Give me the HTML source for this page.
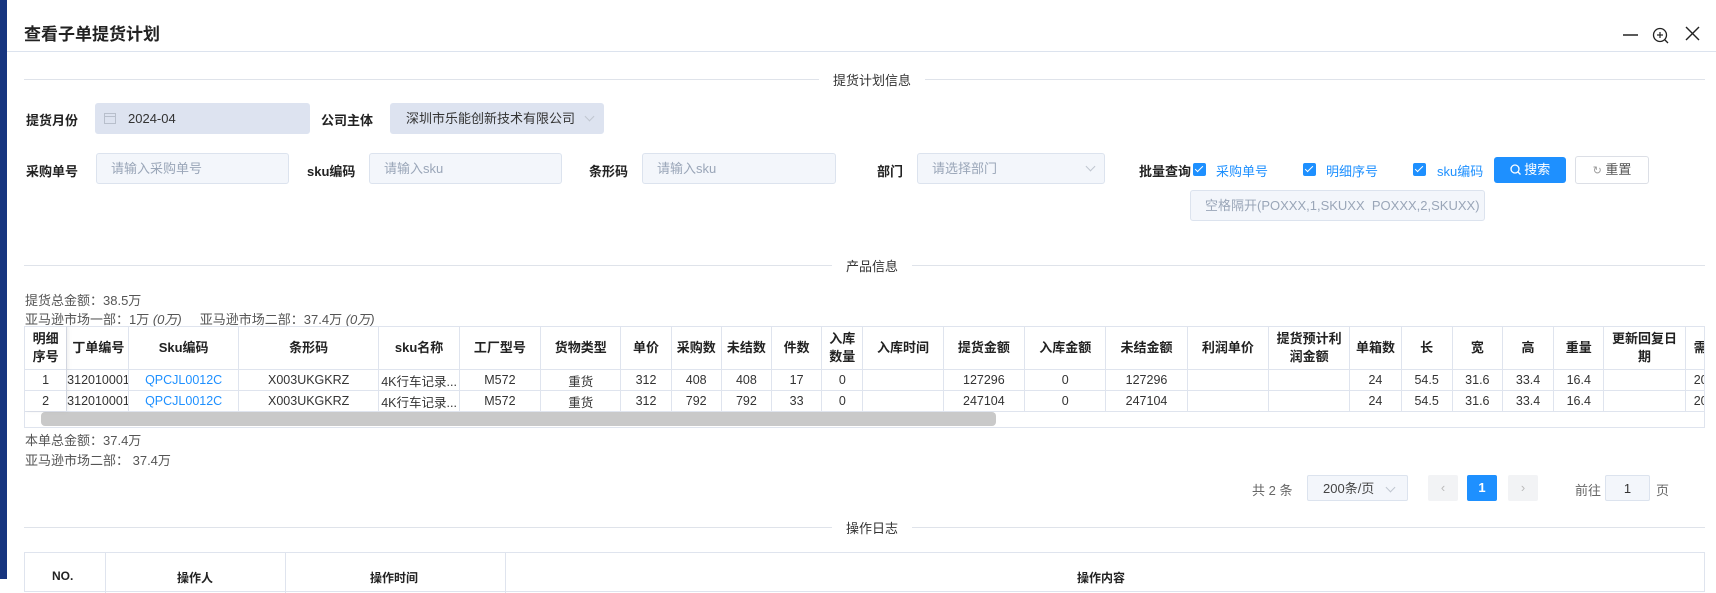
<!DOCTYPE html>
<html><head><meta charset="utf-8">
<style>
*{box-sizing:border-box;margin:0;padding:0}
body{width:1716px;height:579px;overflow:hidden;background:#fff;font-family:"Liberation Sans","Noto Sans CJK SC",sans-serif;font-size:13px;color:#333;position:relative}
.a{position:absolute;white-space:nowrap}
.lbl{font-weight:bold;color:#222;font-size:13px}
.inp{position:absolute;height:31px;border:1px solid #dce3ee;background:#f3f6fb;border-radius:3px;color:#9aa6b8;font-size:13px;line-height:29px;padding-left:14px}
.dis{background:#dde3f0;border-color:#dde3f0;color:#333}
.div{position:absolute;left:24px;right:11px;height:1px;background:#dfe3ea}
.divt{position:absolute;background:#fff;padding:0 14px;font-size:13px;color:#333;transform:translateX(-50%)}
.cb{position:absolute;width:13px;height:13px;background:#1e90ff;border-radius:2px}
.cb:after{content:"";position:absolute;left:4px;top:1px;width:3px;height:7px;border:solid #fff;border-width:0 1.5px 1.5px 0;transform:rotate(45deg)}
.cbt{color:#1e90ff}
table{border-collapse:collapse;table-layout:fixed}
td,th{border:1px solid #dfe4ee;text-align:center;overflow:hidden;white-space:nowrap;font-size:12.5px}
th{font-weight:bold;color:#222;height:43px;line-height:18px;font-size:13px}
td{height:21px;color:#333}
.blue{color:#1e90ff}
.pg{position:absolute;height:26px;top:475px;border-radius:2px;text-align:center;line-height:26px}
.arr{position:absolute;width:7px;height:7px;border:solid #c0c6d0;border-width:0 1px 1px 0;transform:rotate(45deg)}
</style></head><body>
<div class="a" style="left:0;top:0;width:7px;height:579px;background:#17357f"></div>
<div class="a" style="left:24px;top:20px;font-size:17px;font-weight:bold;color:#222">查看子单提货计划</div>
<div class="a" style="left:7px;top:51px;right:0;height:1px;background:#dce3ee"></div>
<svg class="a" style="left:1622px;top:24px" width="90" height="22" viewBox="0 0 90 22">
<line x1="1" y1="11" x2="16" y2="11" stroke="#222" stroke-width="1.5"/>
<circle cx="38" cy="11" r="6.5" fill="none" stroke="#222" stroke-width="1.3"/>
<line x1="42.5" y1="15.5" x2="46" y2="19" stroke="#222" stroke-width="1.3"/>
<line x1="35" y1="11" x2="41" y2="11" stroke="#222" stroke-width="1.2"/><line x1="38" y1="8" x2="38" y2="14" stroke="#222" stroke-width="1.2"/>
<line x1="64" y1="3" x2="77" y2="16" stroke="#222" stroke-width="1.4"/><line x1="77" y1="3" x2="64" y2="16" stroke="#222" stroke-width="1.4"/>
</svg>

<div class="div" style="top:79px"></div><div class="divt" style="left:872px;top:70px">提货计划信息</div>

<div class="a lbl" style="left:26px;top:110px">提货月份</div>
<div class="inp dis" style="left:95px;top:103px;width:215px;padding-left:32px">2024-04</div>
<svg class="a" style="left:104px;top:112px" width="12" height="12"><rect x="0.5" y="1.5" width="11" height="10" fill="none" stroke="#b8bfcc"/><line x1="0" y1="4.5" x2="12" y2="4.5" stroke="#b8bfcc"/></svg>
<div class="a lbl" style="left:321px;top:110px">公司主体</div>
<div class="inp dis" style="left:390px;top:103px;width:214px;padding-left:15px">深圳市乐能创新技术有限公司</div>
<div class="arr" style="left:586px;top:113px"></div>

<div class="a lbl" style="left:26px;top:161px">采购单号</div>
<div class="inp" style="left:96px;top:153px;width:193px">请输入采购单号</div>
<div class="a lbl" style="left:307px;top:161px">sku编码</div>
<div class="inp" style="left:369px;top:153px;width:193px">请输入sku</div>
<div class="a lbl" style="left:589px;top:161px">条形码</div>
<div class="inp" style="left:642px;top:153px;width:194px">请输入sku</div>
<div class="a lbl" style="left:877px;top:161px">部门</div>
<div class="inp" style="left:917px;top:153px;width:188px">请选择部门</div>
<div class="arr" style="left:1087px;top:163px"></div>
<div class="a lbl" style="left:1139px;top:161px">批量查询</div>
<div class="cb" style="left:1193px;top:163px"></div><div class="a cbt" style="left:1216px;top:161px">采购单号</div>
<div class="cb" style="left:1303px;top:163px"></div><div class="a cbt" style="left:1326px;top:161px">明细序号</div>
<div class="cb" style="left:1413px;top:163px"></div><div class="a cbt" style="left:1437px;top:161px">sku编码</div>
<div class="a" style="left:1494px;top:157px;width:72px;height:26px;background:#1e90ff;border-radius:3px;color:#fff;line-height:26px;text-align:center"><svg width="11" height="11" style="vertical-align:-1px"><circle cx="5" cy="5" r="4" fill="none" stroke="#fff" stroke-width="1.3"/><line x1="8" y1="8" x2="10.5" y2="10.5" stroke="#fff" stroke-width="1.3"/></svg> 搜索</div>
<div class="a" style="left:1575px;top:156px;width:74px;height:28px;border:1px solid #dcdfe6;border-radius:3px;color:#555;line-height:26px;text-align:center"><span style="color:#999;font-size:11px">↻</span> 重置</div>
<div class="inp" style="left:1190px;top:190px;width:295px;height:31px;overflow:hidden">空格隔开(POXXX,1,SKUXX&nbsp;&nbsp;POXXX,2,SKUXX)</div>

<div class="div" style="top:265px"></div><div class="divt" style="left:872px;top:256px">产品信息</div>
<div class="a" style="left:25px;top:290px;color:#555">提货总金额：38.5万</div>
<div class="a" style="left:25px;top:309px;color:#555">亚马逊市场一部：1万 <i>(0万)</i>&nbsp;&nbsp;&nbsp;&nbsp;&nbsp;亚马逊市场二部：37.4万 <i>(0万)</i></div>

<div class="a" style="left:24px;top:326px;width:1681px;height:102px;overflow:hidden;border-right:1px solid #dfe4ee">
<table style="width:1712px">
<colgroup><col style="width:42px"><col style="width:62px"><col style="width:109px"><col style="width:140px"><col style="width:80px"><col style="width:81px"><col style="width:80px"><col style="width:50px"><col style="width:50px"><col style="width:50px"><col style="width:50px"><col style="width:41px"><col style="width:80px"><col style="width:81px"><col style="width:81px"><col style="width:81px"><col style="width:81px"><col style="width:81px"><col style="width:51px"><col style="width:51px"><col style="width:50px"><col style="width:51px"><col style="width:50px"><col style="width:81px"><col style="width:50px"></colgroup>
<tr><th>明细<br>序号</th><th style="text-align:right;padding-right:4px">丁单编号</th><th>Sku编码</th><th>条形码</th><th>sku名称</th><th>工厂型号</th><th>货物类型</th><th>单价</th><th>采购数</th><th>未结数</th><th>件数</th><th>入库<br>数量</th><th>入库时间</th><th>提货金额</th><th>入库金额</th><th>未结金额</th><th>利润单价</th><th>提货预计利<br>润金额</th><th>单箱数</th><th>长</th><th>宽</th><th>高</th><th>重量</th><th>更新回复日<br>期</th><th style="text-align:left;padding-left:8px">需求</th></tr>
<tr><td>1</td><td style="text-align:right;padding-right:3px">312010001</td><td class="blue">QPCJL0012C</td><td>X003UKGKRZ</td><td>4K行车记录...</td><td>M572</td><td>重货</td><td>312</td><td>408</td><td>408</td><td>17</td><td>0</td><td></td><td>127296</td><td>0</td><td>127296</td><td></td><td></td><td>24</td><td>54.5</td><td>31.6</td><td>33.4</td><td>16.4</td><td></td><td style="text-align:left;padding-left:8px">2024-</td></tr>
<tr><td>2</td><td style="text-align:right;padding-right:3px">312010001</td><td class="blue">QPCJL0012C</td><td>X003UKGKRZ</td><td>4K行车记录...</td><td>M572</td><td>重货</td><td>312</td><td>792</td><td>792</td><td>33</td><td>0</td><td></td><td>247104</td><td>0</td><td>247104</td><td></td><td></td><td>24</td><td>54.5</td><td>31.6</td><td>33.4</td><td>16.4</td><td></td><td style="text-align:left;padding-left:8px">2024-</td></tr>
</table>
<div class="a" style="left:0;top:85px;width:1681px;height:17px;border:1px solid #dfe4ee;border-top:none"></div>
<div class="a" style="left:17px;top:86px;width:955px;height:14px;background:#c9c9c9;border-radius:4px"></div>
<div class="a" style="left:0;top:0;width:42px;height:85px;box-shadow:2px 0 4px rgba(0,0,0,0.08)"></div>
</div>

<div class="a" style="left:25px;top:430px;color:#555">本单总金额：37.4万</div>
<div class="a" style="left:25px;top:450px;color:#555">亚马逊市场二部：&nbsp;37.4万</div>

<div class="a" style="left:1252px;top:480px;color:#666">共 2 条</div>
<div class="pg" style="left:1307px;width:101px;border:1px solid #dce3ee;background:#f3f6fb;text-align:left;padding-left:15px;color:#444">200条/页</div>
<div class="arr" style="left:1387px;top:484px"></div>
<div class="pg" style="left:1428px;width:30px;background:#f2f3f5;color:#bbb">‹</div>
<div class="pg" style="left:1467px;width:30px;background:#1e90ff;color:#fff;font-weight:bold">1</div>
<div class="pg" style="left:1508px;width:30px;background:#f2f3f5;color:#bbb">›</div>
<div class="a" style="left:1575px;top:480px;color:#666">前往</div>
<div class="pg" style="left:1605px;width:45px;border:1px solid #dce3ee;background:#f3f6fb;color:#333">1</div>
<div class="a" style="left:1656px;top:480px;color:#666">页</div>

<div class="div" style="top:527px"></div><div class="divt" style="left:872px;top:518px">操作日志</div>
<div class="a" style="left:24px;top:552px;width:1681px;height:40px;border:1px solid #dfe4ee">
<div class="a" style="left:80px;top:0;width:1px;height:40px;background:#dfe4ee"></div>
<div class="a" style="left:260px;top:0;width:1px;height:40px;background:#dfe4ee"></div>
<div class="a" style="left:480px;top:0;width:1px;height:40px;background:#dfe4ee"></div>
<div class="a lbl" style="left:27px;top:16px;font-size:12px">NO.</div>
<div class="a lbl" style="left:152px;top:16px;font-size:12px">操作人</div>
<div class="a lbl" style="left:345px;top:16px;font-size:12px">操作时间</div>
<div class="a lbl" style="left:1052px;top:16px;font-size:12px">操作内容</div>
</div>
</body></html>
